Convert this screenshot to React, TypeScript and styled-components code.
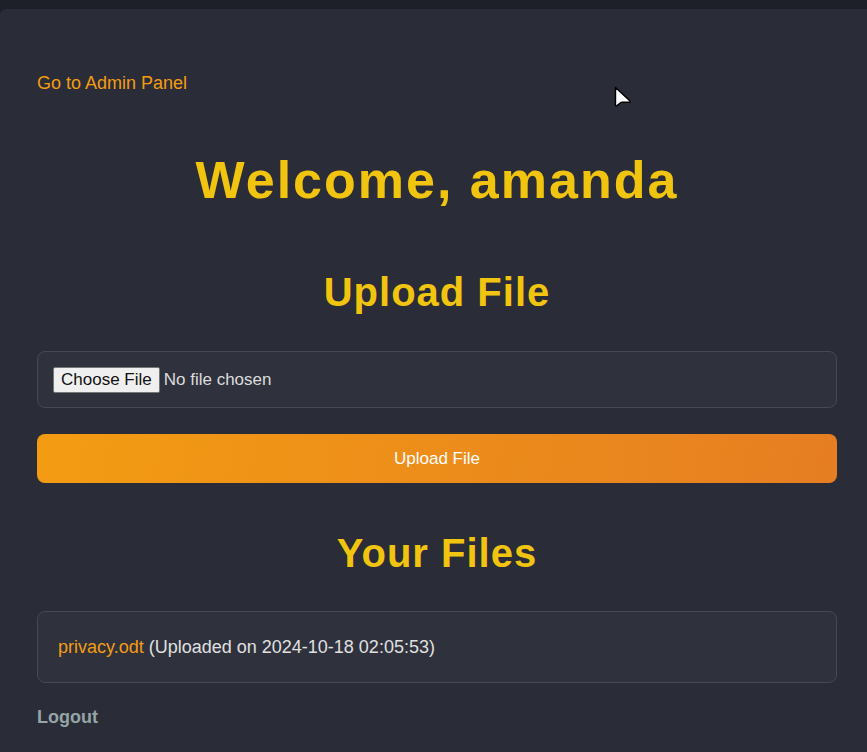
import React from 'react';
import styled, { createGlobalStyle } from 'styled-components';

const GlobalStyle = createGlobalStyle`
  html, body {
    margin: 0;
    padding: 0;
    background: #1e2029;
    font-family: "Liberation Sans", Arial, sans-serif;
    overflow: hidden;
  }
  body {
    padding-top: 9px;
  }
`;

const Container = styled.div`
  position: relative;
  box-sizing: border-box;
  width: 874px;
  min-height: 760px;
  padding: 0 37px;
  background: #2a2c38;
  border-radius: 6px 6px 0 0;
`;

const Nav = styled.nav`
  padding-top: 64px;
  line-height: 20px;
`;

const NavLink = styled.a`
  color: #f39c12;
  font-size: 18px;
  text-decoration: none;
`;

const Title = styled.h1`
  margin: 56px 0 0;
  font-size: 52px;
  line-height: 60px;
  font-weight: 700;
  letter-spacing: 2px;
  color: #f1c40f;
  text-align: center;
`;

const SectionTitle = styled.h2<{ $gap: number }>`
  margin: ${({ $gap }) => $gap}px 0 0;
  font-size: 40px;
  line-height: 48px;
  font-weight: 700;
  letter-spacing: 1px;
  color: #f1c40f;
  text-align: center;
`;

const UploadForm = styled.form`
  display: flex;
  flex-direction: column;
  gap: 26px;
  margin-top: 35px;
`;

const FileInput = styled.input`
  box-sizing: border-box;
  width: 100%;
  height: 57px;
  padding: 15px;
  background: #2f323d;
  border: 1px solid #454955;
  border-radius: 8px;
  color: #dcdcdc;
  font-family: "Liberation Sans", Arial, sans-serif;
  font-size: 17px;

  &::file-selector-button {
    font-family: "Liberation Sans", Arial, sans-serif;
    font-size: 17px;
    color: #111;
    background: #efefef;
    border: 1px solid #767676;
    border-radius: 2px;
    padding: 1px 7px;
    margin-right: 4px;
    height: 26px;
  }
`;

const SubmitButton = styled.button`
  height: 49px;
  border: none;
  border-radius: 8px;
  background: linear-gradient(100deg, #f39c12, #e67e22);
  color: #fff;
  font-family: "Liberation Sans", Arial, sans-serif;
  font-size: 17px;
  cursor: pointer;
`;

const FileList = styled.ul`
  list-style: none;
  margin: 34px 0 0;
  padding: 0;
`;

const FileItem = styled.li`
  box-sizing: border-box;
  height: 72px;
  padding: 20px;
  background: #2f323d;
  border: 1px solid #454955;
  border-radius: 8px;
  color: #e0e0e0;
  font-size: 18px;
  line-height: 30px;
`;

const FileLink = styled.a`
  color: #f39c12;
  text-decoration: none;
`;

const Logout = styled.a`
  display: block;
  margin-top: 24px;
  line-height: 20px;
  color: #95a5a6;
  font-size: 18px;
  font-weight: 700;
  text-decoration: none;
`;

const Cursor = styled.svg`
  position: absolute;
  left: 614px;
  top: 77px;
`;

export default function App() {
  return (
    <>
      <GlobalStyle />
      <Container>
        <Nav>
          <NavLink href="#">Go to Admin Panel</NavLink>
        </Nav>
        <Title>Welcome, amanda</Title>
        <SectionTitle $gap={58}>Upload File</SectionTitle>
        <UploadForm onSubmit={(e) => e.preventDefault()}>
          <FileInput type="file" />
          <SubmitButton type="submit">Upload File</SubmitButton>
        </UploadForm>
        <SectionTitle $gap={46}>Your Files</SectionTitle>
        <FileList>
          <FileItem>
            <FileLink href="#">privacy.odt</FileLink> (Uploaded on 2024-10-18 02:05:53)
          </FileItem>
        </FileList>
        <Logout href="#">Logout</Logout>
        <Cursor width="20" height="24" viewBox="0 0 20 24">
          <path
            d="M1.5 1.5 L1.5 19 Q1.5 20.5 3 19.6 L6.5 16.8 Q7.2 16.3 8 16.3 L15.5 16.3 Q17 16.2 16 15 Z"
            fill="#fff"
            stroke="#000"
            strokeWidth="1.4"
            strokeLinejoin="round"
          />
        </Cursor>
      </Container>
    </>
  );
}
